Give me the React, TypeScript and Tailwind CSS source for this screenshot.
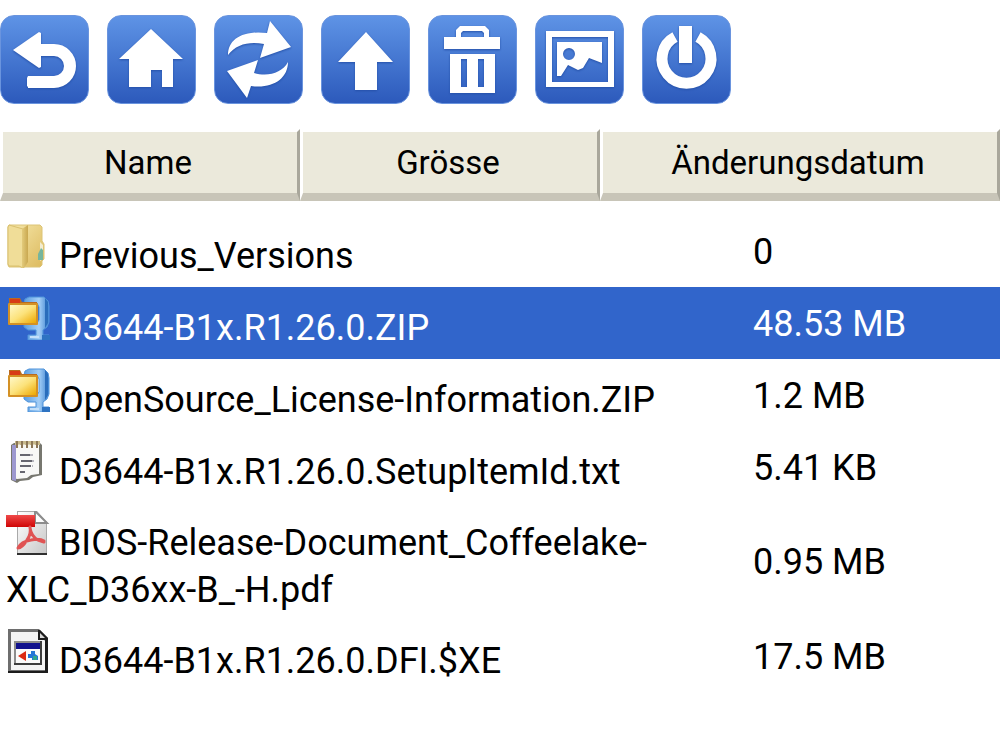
import { useState, type ReactNode } from 'react'
import clsx from 'clsx'

interface FileEntry {
  name: string
  size: string
  icon: () => ReactNode
}

interface ToolbarButtonProps {
  label: string
  children: ReactNode
}

const files: FileEntry[] = [
  { name: 'Previous_Versions', size: '0', icon: FolderIcon },
  { name: 'D3644-B1x.R1.26.0.ZIP', size: '48.53 MB', icon: ZipIcon },
  { name: 'OpenSource_License-Information.ZIP', size: '1.2 MB', icon: ZipIcon },
  { name: 'D3644-B1x.R1.26.0.SetupItemId.txt', size: '5.41 KB', icon: TextIcon },
  { name: 'BIOS-Release-Document_Coffeelake-XLC_D36xx-B_-H.pdf', size: '0.95 MB', icon: PdfIcon },
  { name: 'D3644-B1x.R1.26.0.DFI.$XE', size: '17.5 MB', icon: ExeIcon },
]

const columns = ['Name', 'Grösse', 'Änderungsdatum']

const fileIconClass = 'inline-block size-11 align-baseline'

// Shared gradients, referenced by id from the icons below
function Gradients() {
  return (
    <svg className="absolute size-0" aria-hidden="true">
      <defs>
        <linearGradient id="folder" x1="0" y1="0" x2="1" y2="1">
          <stop offset="0" stopColor="#f6e8ac" />
          <stop offset="1" stopColor="#dcb95c" />
        </linearGradient>
        <linearGradient id="folderFlap" x1="0" y1="0" x2="1" y2="0">
          <stop offset="0" stopColor="#e3cb7c" />
          <stop offset="1" stopColor="#c9a850" />
        </linearGradient>
        <linearGradient id="zipFolder" x1="0" y1="0" x2="1" y2="1">
          <stop offset="0" stopColor="#fff8c8" />
          <stop offset="0.5" stopColor="#fce27a" />
          <stop offset="1" stopColor="#eda800" />
        </linearGradient>
        <linearGradient id="clamp" x1="0" y1="0" x2="1" y2="0">
          <stop offset="0" stopColor="#5b9de0" />
          <stop offset="0.6" stopColor="#a4cff7" />
          <stop offset="1" stopColor="#3c82d0" />
        </linearGradient>
        <linearGradient id="paper" x1="0" y1="0" x2="1" y2="1">
          <stop offset="0" stopColor="#ffffff" />
          <stop offset="1" stopColor="#c8c8c8" />
        </linearGradient>
        <linearGradient id="pdfBand" x1="0" y1="0" x2="0" y2="1">
          <stop offset="0" stopColor="#f04a4a" />
          <stop offset="1" stopColor="#cf0505" />
        </linearGradient>
      </defs>
    </svg>
  )
}

function FolderIcon() {
  return (
    <svg viewBox="0 0 44 44" className={fileIconClass} aria-hidden="true">
      <path d="M3 1h31l2 2v14l2 3v15l-2 2v4l-2 2H3l-1-2V3z" fill="url(#folder)" stroke="#dcc477" />
      <path d="M3 1l14 4v39l-4-2H3l-1-2V3z" fill="#f0dd98" stroke="#d9c06f" />
      <path d="M16 5l6-4v37l-4 6h-2z" fill="url(#folderFlap)" />
      <path d="M34 18l3 3v14l-3 2z" fill="#f2ecd0" />
      <path d="M32 30l3-6 2 2v10h-5z" fill="#75b59d" />
    </svg>
  )
}

function ZipIcon() {
  return (
    <svg viewBox="0 0 44 44" className={fileIconClass} aria-hidden="true">
      <path
        d="M18 7l1-4 4-2h15l4 4 1 5v16l-2 5-4 3v5h6v5H22v-5h8v-5h-8l-4-3v-4h13l2-3V11l-2-4z"
        fill="url(#clamp)"
        stroke="#4f93da"
      />
      <path d="M39 2l3 4v21l-3 5z" fill="#2a6dbb" />
      <path d="M24 41h9" stroke="#c3e0fa" strokeWidth="2" />
      <path d="M36 39v5h8v-5z" fill="#2e73c2" />
      <path d="M3 2h11l2 4h15v22H3z" fill="#b96b20" />
      <rect x="4" y="3" width="10" height="4" fill="#d83b16" />
      <rect x="2" y="7" width="30" height="22" rx="1" fill="#d49125" />
      <rect x="4" y="9" width="26" height="18" fill="url(#zipFolder)" />
    </svg>
  )
}

function TextIcon() {
  return (
    <svg viewBox="0 0 44 44" className={fileIconClass} aria-hidden="true">
      <path d="M8 3h26l2 2v30l-9 2-4 3-9 1-3 2-6-3V5z" fill="#77776f" />
      <path d="M8 5h25v29l-8 1-4 3-10 1-3-1z" fill="#f8f8f6" />
      <path d="M6 5h4v36l-4-1z" fill="#9d98cf" />
      <path d="M9 1h25v4H9z" fill="#c8ba8c" />
      <path d="M11 1v7m5-7v7m5-7v7m5-7v7m5-7v7" stroke="#8b7656" strokeWidth="2" />
      <path d="M13 4v4m5-4v4m5-4v4m5-4v4" stroke="#f4f1e3" strokeWidth="1" />
      <path d="M14 15h10M15 21h11M14 26h11M14 32h5" stroke="#66666f" strokeWidth="2" />
      <path d="M24 15h3m-1 6h2m-2 5h1" stroke="#b6b6bd" strokeWidth="2" />
    </svg>
  )
}

function PdfIcon() {
  return (
    <svg viewBox="0 0 44 44" className={fileIconClass} aria-hidden="true">
      <path d="M11 0h20l10 11v33H11z" fill="#a9a9a9" />
      <path d="M12 1h19l9 10v31H12z" fill="url(#paper)" />
      <path d="M29 0l12 12H29z" fill="#fdfdfd" stroke="#8c8c8c" strokeWidth="2" />
      <path d="M11 43h30" stroke="#303030" strokeWidth="2" />
      <rect x="0" y="4" width="29" height="12" fill="url(#pdfBand)" />
      <path
        d="M24 16c1 5 0 9-3 13-3 5-7 8-9 8M24 17c1 6 4 10 8 12l6 2M12 37c2-4 7-7 13-8 5-1 10-1 13 1"
        fill="none"
        stroke="#e05454"
        strokeWidth="3"
        strokeLinecap="round"
      />
    </svg>
  )
}

function ExeIcon() {
  return (
    <svg viewBox="0 0 44 44" className={fileIconClass} aria-hidden="true">
      <path d="M2 0h31l9 9v35H2z" fill="#6e6e6e" />
      <path d="M5 3h27l7 9v29H5z" fill="#f4f4f4" />
      <path d="M32 1v10h7v33h3V9l-8-8z" fill="#1c1c1c" />
      <path d="M34 4l5 5h-5z" fill="#d8d8d8" />
      <path d="M2 43h40" stroke="#1c1c1c" strokeWidth="2" />
      <rect x="8" y="12" width="28" height="24" fill="#8c8c8c" />
      <path d="M35 12v23H8" fill="none" stroke="#3d3d3d" strokeWidth="2" />
      <rect x="10" y="14" width="24" height="6" fill="#10108c" />
      <rect x="10" y="20" width="24" height="14" fill="#fafafa" />
      <path d="M12 27l8-5v10z" fill="#dc2a12" />
      <path d="M22 25h3v-3h4v3l3 2v4h-6v-2h-4z" fill="#2475d6" />
      <path d="M27 27h4v4h-4z" fill="#31a58d" />
    </svg>
  )
}

function ToolbarButton({ label, children }: ToolbarButtonProps) {
  return (
    <button
      type="button"
      aria-label={label}
      className="size-[89px] shrink-0 rounded-[14px] border border-[#6a94de] bg-linear-to-b from-[#5f94e6] to-[#2c59bb] bg-origin-border text-white"
    >
      <svg viewBox="1 1 87 87" className="size-full drop-shadow-[0_1px_1px_#2450a8]" fill="currentColor" aria-hidden="true">
        {children}
      </svg>
    </button>
  )
}

function Toolbar() {
  return (
    <div role="toolbar" className="flex gap-[18px] pt-[15px]">
      <ToolbarButton label="Zurück">
        <path d="M13 35L39 17l2 1v34l-2 1z" />
        <path d="M38 35H54a16 16 0 0 1 0 32H28" fill="none" stroke="currentColor" strokeWidth="12" />
        <path d="M29 61h-1l-1 2v8l2 2h2V61z" />
      </ToolbarButton>
      <ToolbarButton label="Startseite">
        <path d="M44 14L76 44H66V72H55V55H44V72H22V44H12z" />
      </ToolbarButton>
      <ToolbarButton label="Aktualisieren">
        <path d="M14 40C14 25 27 15 53 18L56 6 77 32 46 43 50 29C36 26 22 29 14 40z" />
        <path d="M13 56L44 45 40 58C54 62 68 58 74 47 74 64 58 74 37 71L33 83z" />
      </ToolbarButton>
      <ToolbarButton label="Hochladen">
        <path d="M45 17L72 47H56V75H34V47H17z" />
      </ToolbarButton>
      <ToolbarButton label="Löschen">
        <path
          fillRule="evenodd"
          d="M16 22H28V15l4-4H57l4 4v7H72V34H16zM33 22H56V18l-2-2H35l-2 2z"
        />
        <path fillRule="evenodd" d="M22 39H67V78H22zM33 44V72H39V44zM50 44V72H56V44z" />
      </ToolbarButton>
      <ToolbarButton label="Bilder">
        <path fillRule="evenodd" d="M11 16H79V72H11zM17 22V67H73V22z" />
        <path
          fillRule="evenodd"
          d="M22 27H67V48L54 43 48 53 43 55 33 50 26 61H22zM34 33a6 6 0 1 0 0 12 6 6 0 0 0 0-12z"
        />
      </ToolbarButton>
      <ToolbarButton label="Abmelden">
        <path d="M33 22A24.500 24.500 0 1 0 56 22" fill="none" stroke="currentColor" strokeWidth="11" />
        <rect x="37" y="11" width="13" height="37" />
      </ToolbarButton>
    </div>
  )
}

export default function App() {
  const [selected, setSelected] = useState('D3644-B1x.R1.26.0.ZIP')

  return (
    <main className="min-h-screen bg-white font-[Roboto,sans-serif] text-black">
      <Gradients />
      <Toolbar />

      <div className="mt-[25px] grid grid-cols-[3fr_3fr_4fr]">
        {columns.map((column) => (
          <button
            key={column}
            type="button"
            className="h-[72px] border-t-3 border-r-3 border-b-8 border-l-3 border-t-white border-r-[#a9a79b] border-b-[#c8c5b8] border-l-white bg-[#ebe9db] pr-1 text-[33px] leading-10"
          >
            {column}
          </button>
        ))}
      </div>

      <table className="mt-3.5 w-full table-fixed border-collapse text-left text-[36px] leading-[47px]">
        <colgroup>
          <col className="w-[70%]" />
          <col />
        </colgroup>
        <tbody>
          {files.map((file) => (
            <tr
              key={file.name}
              onClick={() => setSelected(file.name)}
              className={clsx('h-[72px] cursor-default', file.name === selected && 'bg-[#3165cb] text-white')}
            >
              <td className="px-1.5 pt-2 pb-1.5 align-middle">
                <file.icon /> {file.name}
              </td>
              <td className="pt-2 pb-1.5 pl-[53px] align-middle">{file.size}</td>
            </tr>
          ))}
        </tbody>
      </table>
    </main>
  )
}
